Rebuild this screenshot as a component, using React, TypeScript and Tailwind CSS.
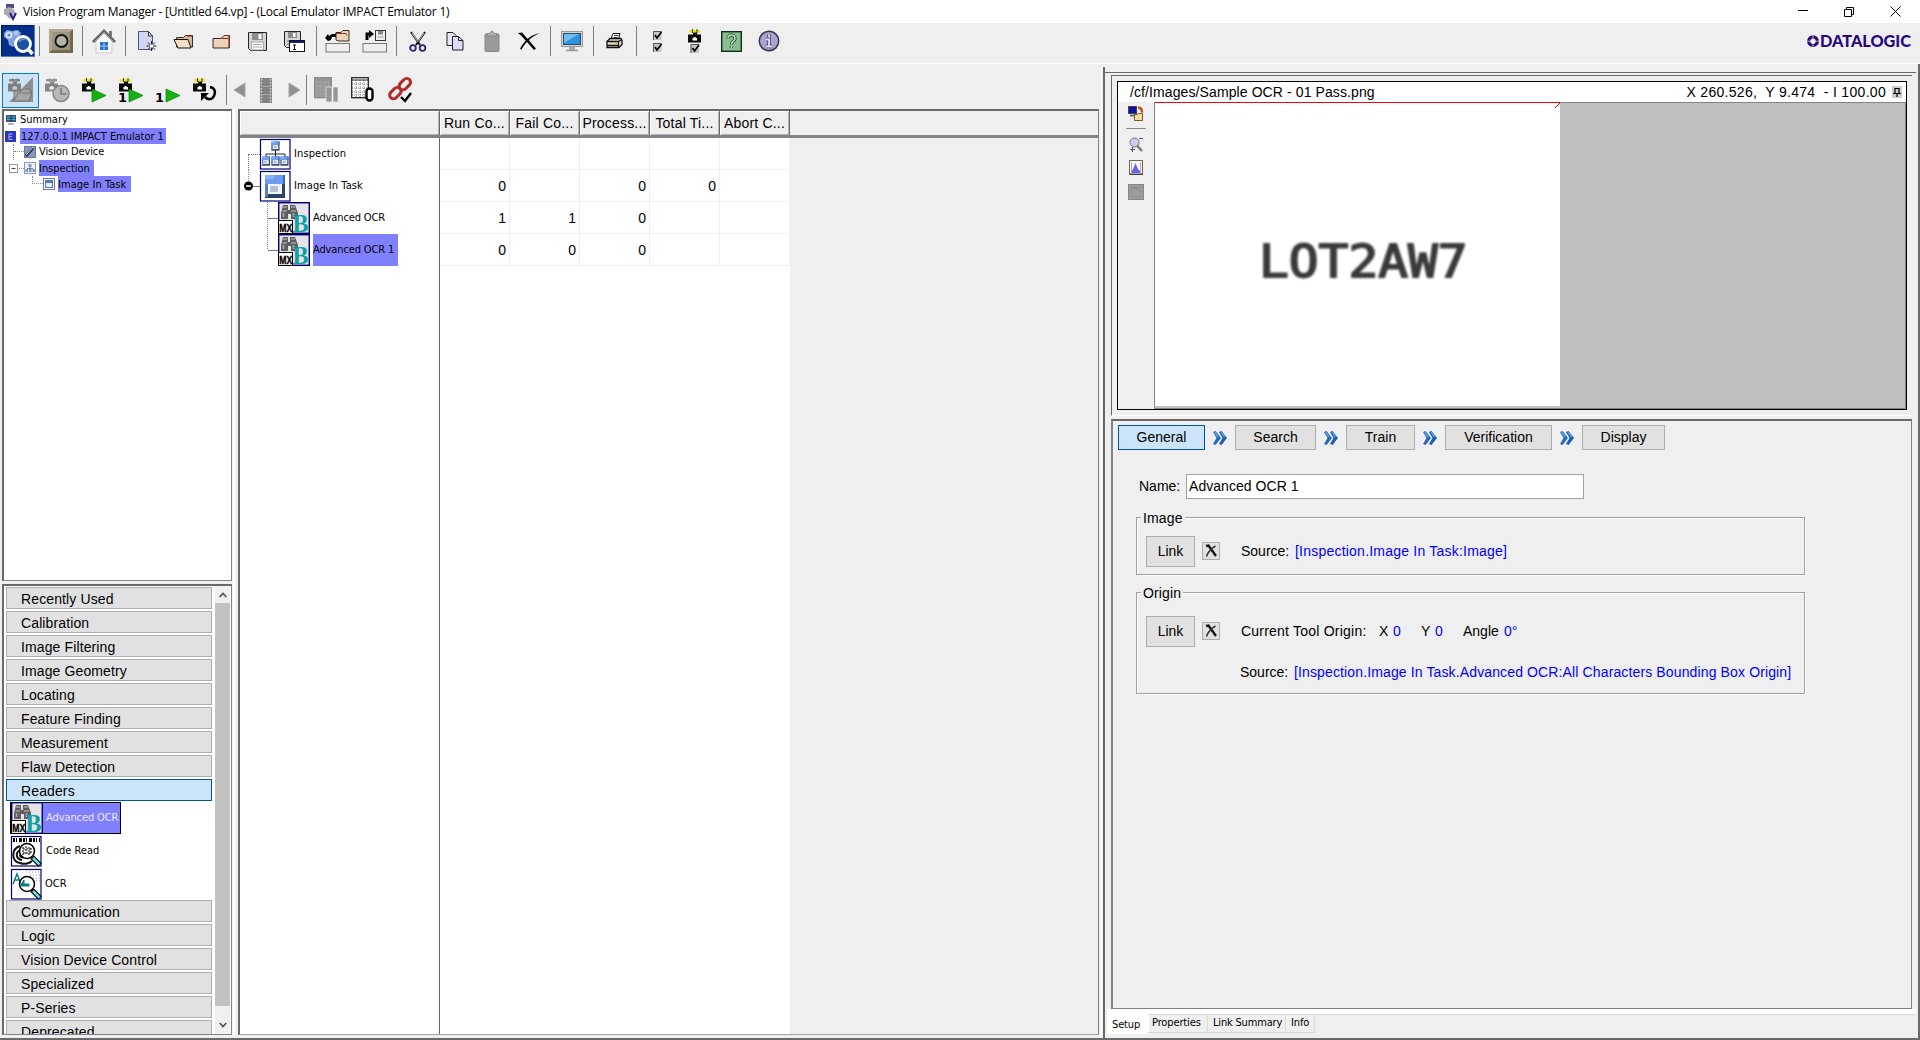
import React from "react";

type Kids = { children?: React.ReactNode };

const Svg = ({ w, h, vb, children }: Kids & { w: number; h: number; vb?: string }) => (
  <svg width={w} height={h} viewBox={vb ?? `0 0 ${w} ${h}`} fill="none" className="block shrink-0 overflow-visible">
    {children}
  </svg>
);

/* ---------- toolbar icons ---------- */
const MainIcon = () => (
  <Svg w={34} h={32}>
    <rect x="0.5" y="0.5" width="33" height="31" fill="#04308a" stroke="#001a5c" />
    <path d="M0 31.5H34M33.500 0V32" stroke="#5578b8" />
    <path d="M3 8l3-3 5 1 6-1 3 3-5 12-3 2-4-2-1-5-4-3z" fill="#7fa3dc" />
    <circle cx="8" cy="10" r="3.500" fill="#d4e2f8" />
    <circle cx="8" cy="10" r="1.500" fill="#5d86c8" />
    <circle cx="15" cy="8" r="2.500" fill="#a9c4ec" />
    <circle cx="22" cy="19" r="7.500" fill="#1c4fa6" stroke="#fff" strokeWidth="2.800" />
    <path d="M18 17c1-2 3-3 6-2.500" stroke="#6c99dc" strokeWidth="1.500" />
    <path d="M28 25l3.500 4" stroke="#fff" strokeWidth="3.500" />
  </Svg>
);
const CircleButtonIcon = () => (
  <Svg w={24} h={24}>
    <rect width="24" height="24" fill="#75694c" />
    <path d="M0 0H24L21 3H3V21L0 24z" fill="#b0a88c" />
    <rect x="3" y="3" width="18" height="18" fill="#9b9480" />
    <circle cx="12.500" cy="12" r="6" fill="#b4b4ac" stroke="#111" strokeWidth="1.800" />
  </Svg>
);
const HomeIcon = () => (
  <Svg w={24} h={25}>
    <path d="M4 12L12 4l8 8v12H4z" fill="#f8f8f8" stroke="#bbb" strokeWidth=".7" />
    <path d="M17 2h3v6l-3-2z" fill="#777" />
    <path d="M1 13L12 2l11 11" stroke="#646464" strokeWidth="2.800" />
    <path d="M3 12L12 3l9 9" stroke="#a8a8a8" strokeWidth=".8" />
    <rect x="8" y="13" width="8" height="8" fill="#2571c9" />
    <path d="M8 17h8M12 13v8" stroke="#9fd2fa" />
  </Svg>
);
const NewIcon = () => (
  <Svg w={17} h={22}>
    <path d="M.5 1.500h10l4 4v14H.5z" fill="#d3d5f3" stroke="#525278" />
    <path d="M10.500 1.500l4 4.500h-4z" fill="#fff" stroke="#333" />
    <path d="M13.500 11v10M8.500 16h10M10 12.500l7 7M17 12.500l-7 7" stroke="#222" />
    <rect x="12" y="14.500" width="3" height="3" fill="#fff" />
  </Svg>
);
const OpenIcon = () => (
  <Svg w={22} h={15}>
    <path d="M3.500 13V3.500h7l2-2h7V13z" fill="#d7b797" stroke="#3a2a20" />
    <path d="M1 5.500h14l3 8.500H5z" fill="#f6dfc8" stroke="#111" />
    <path d="M14 2h5" stroke="#7e2222" />
  </Svg>
);
const FolderIcon = () => (
  <Svg w={18} h={15}>
    <path d="M1 14V4.500h8l3-3h5V14z" fill="#ecd2b8" stroke="#3a2a20" />
    <path d="M12 1.500h5.500V14M9.500 4.500H16" stroke="#7e2a22" />
  </Svg>
);
const Floppy = ({ s = 19 }: { s?: number }) => (
  <Svg w={s} h={s} vb="0 0 19 19">
    <path d="M.5.5h18v18h-16l-2-2z" fill="#d6d6d6" stroke="#222" />
    <rect x="4" y="1" width="11" height="7" fill="#8d8d8d" />
    <rect x="10.500" y="2" width="3" height="5" fill="#fff" />
    <rect x="3.500" y="10" width="12" height="8" fill="#fff" stroke="#999" strokeWidth=".8" />
    <path d="M5 12.500h9M5 15h9" stroke="#aaa" />
  </Svg>
);
const SaveAsIcon = () => (
  <Svg w={22} h={21}>
    <path d="M.5.5h16v16h-14l-2-2z" fill="#d6d6d6" stroke="#222" />
    <rect x="4" y="1" width="9" height="6" fill="#8d8d8d" />
    <rect x="9" y="2" width="2.500" height="4" fill="#fff" />
    <path d="M3 10h7M3 13h5" stroke="#777" />
    <rect x="5.500" y="9.500" width="15" height="11" fill="#fff" stroke="#111" />
    <path d="M6 11h14" stroke="#10208a" strokeWidth="2" />
    <path d="M9 14h3M9 18.500h3M10.500 14v4.500" stroke="#111" />
  </Svg>
);
const LoadIcon = () => (
  <Svg w={25} h={24}>
    <rect x="1" y="14.500" width="23.500" height="8.500" fill="#efefef" stroke="#777" />
    <path d="M11 11V3.500h5l2-2h6V12H14z" fill="#ecd2b8" stroke="#3a2a20" />
    <path d="M10 4.500h11l1 2" stroke="#8a3a2a" />
    <path d="M0 9l3-4 1 2 3-2h4v3H7l-1 3-3 1z" fill="#000" />
  </Svg>
);
const StoreIcon = () => (
  <Svg w={25} h={24}>
    <rect x="1" y="14.500" width="23.500" height="8.500" fill="#efefef" stroke="#777" />
    <path d="M5 11V5h3" stroke="#000" strokeWidth="3" />
    <path d="M7 1l5 4-5 4z" fill="#000" />
    <rect x="13.500" y="1.500" width="10" height="10" fill="#eee" stroke="#333" />
    <rect x="16" y="2" width="5" height="3.500" fill="#888" />
    <path d="M15.500 8h6" stroke="#999" />
  </Svg>
);
const ScissorsIcon = () => (
  <Svg w={18} h={21}>
    <path d="M2 1l9 13M16 1L7 14" stroke="#111" strokeWidth="2" />
    <path d="M3 2l6 9M15 2L9.500 10" stroke="#f4f4f4" strokeWidth=".8" />
    <circle cx="4" cy="17" r="2.800" stroke="#26266e" strokeWidth="1.800" />
    <circle cx="13.500" cy="17" r="2.800" stroke="#26266e" strokeWidth="1.800" />
  </Svg>
);
const CopyIcon = () => (
  <Svg w={18} h={20}>
    <path d="M1 1.500h6l3 3v10H1z" fill="#e4e4f6" stroke="#222" />
    <path d="M6.500 5.500h6l4.500 4V19H6.500z" fill="#dcdcf6" stroke="#222" />
    <path d="M12.500 5.500v4H17" stroke="#222" />
  </Svg>
);
const PasteIcon = () => (
  <Svg w={16} h={22}>
    <rect x="1" y="4" width="14" height="17.500" rx="1" fill="#9a9a9a" stroke="#858585" />
    <path d="M3 6V3.500h2.500L8 .8l2.500 2.700H13V6z" fill="#b2b2b2" stroke="#858585" />
  </Svg>
);
const DeleteIcon = () => (
  <Svg w={22} h={19}>
    <path d="M0 1l4-.5c4 4.500 8 9 14 16l-2 1.500C10 11 5 5 0 1z" fill="#000" />
    <path d="M22 1C15 4 8 9 3.500 17.500L2 17C6 9 12 3 22 1z" fill="#000" />
  </Svg>
);
const MonitorIcon = () => (
  <Svg w={22} h={21}>
    <rect x=".5" y=".5" width="21" height="15" fill="#d5d5d5" stroke="#999" />
    <rect x="2.500" y="2.500" width="17" height="11" fill="#2e93dc" stroke="#2a4a6a" />
    <path d="M3 3h15L3 12z" fill="#70bdf0" />
    <path d="M8 16h6v3H8z" fill="#aaa" />
    <path d="M5 19.500h12" stroke="#999" strokeWidth="1.500" />
  </Svg>
);
const PrinterIcon = () => (
  <Svg w={17} h={16}>
    <path d="M5 6l2-5.500h7L12.500 6z" fill="#fff" stroke="#111" />
    <path d="M8 2.500h4.500M7.500 4.500h4" stroke="#333" />
    <path d="M1 8.500l3-3h11l1 2v4l-3 3H1z" fill="#ddd" stroke="#111" strokeWidth="1.300" />
    <path d="M1 8.500h11.500V15M12.500 8.500l3.500-2M1 12.500h11.500" stroke="#111" strokeWidth="1.300" />
    <path d="M7 10.500h4" stroke="#dfd317" strokeWidth="1.500" />
  </Svg>
);
const CheckBoxShape = ({ x, y }: { x: number; y: number }) => (
  <g transform={`translate(${x} ${y})`}>
    <rect width="8.500" height="9" fill="#c8c8c8" />
    <path d="M.5 9V.5h8" stroke="#555" />
    <path d="M2 4l2 3 4.500-6" stroke="#000" strokeWidth="1.700" />
  </g>
);
const ChecksIcon = () => (
  <Svg w={9} h={22}>
    <CheckBoxShape x={0} y={1} />
    <CheckBoxShape x={0} y={13} />
  </Svg>
);
const CameraShape = ({ top = "#efe514", body = "#0b0b0b", lens = "#fff" }) => (
  <g>
    <rect x="1" y="1" width="11" height="2.500" fill={top} />
    <path d="M4.500 0v4M9 0v4" stroke={body} strokeWidth=".8" />
    <path d="M5 3.500h4V6H5z" fill={body} />
    <rect x="0" y="5.500" width="13" height="8" fill={body} />
    <path d="M4.500 11.500V9h1.200V8h2v1H9v2.500z" fill={lens} />
  </g>
);
const CameraCheckIcon = () => (
  <Svg w={13} h={25}>
    <CameraShape />
    <CheckBoxShape x={2.500} y={15} />
  </Svg>
);
const HelpIcon = () => (
  <Svg w={21} h={21}>
    <rect x=".7" y=".7" width="19.600" height="19.600" fill="#8bbd92" stroke="#142c18" strokeWidth="1.400" />
    <path d="M7 7.500C7 3 14 3 14 7.500c0 3-3.500 2.500-3.500 6M10.500 15v2" stroke="#174023" strokeWidth="3.200" />
    <path d="M7 7.500C7 3 14 3 14 7.500c0 3-3.500 2.500-3.500 6M10.500 15v2" stroke="#b5dcb9" strokeWidth="1.700" />
  </Svg>
);
const InfoIcon = () => (
  <Svg w={22} h={22}>
    <circle cx="11" cy="11" r="9.700" fill="#aaa6d2" stroke="#37334f" strokeWidth="1.500" />
    <path d="M11 4.500v3M8 9.500h3V16M7.500 16.500h7" stroke="#454065" strokeWidth="3.500" />
    <path d="M11 4.500v3M8 9.500h3V16M7.500 16.500h7" stroke="#e6e3f8" strokeWidth="1.800" />
  </Svg>
);

/* ---------- run toolbar icons ---------- */
const CamFolderIcon = () => (
  <Svg w={26} h={26}>
    <path d="M25 0v25H1z" fill="#8e8e8e" />
    <g transform="translate(0 1)"><CameraShape top="#858585" body="#7f7f7f" lens="#b9d0e2" /></g>
    <path d="M6 24V14h7l2-2h7v3h2l-3 9z" fill="#a5a5a5" stroke="#777" />
    <path d="M6 24l4-8h14" stroke="#777" />
  </Svg>
);
const CamClockIcon = () => (
  <Svg w={26} h={26}>
    <g transform="translate(1 1)"><CameraShape top="#999" body="#868686" lens="#eee" /></g>
    <circle cx="17" cy="16.500" r="8" fill="#b7b7b7" stroke="#858585" strokeWidth="1.500" />
    <path d="M17 11v6h5" stroke="#777" strokeWidth="1.500" />
  </Svg>
);
const Play = ({ x, y }: { x: number; y: number }) => (
  <path d={`M${x} ${y}l14 6.500-14 6.500z`} fill="#12b312" stroke="#087c08" strokeWidth=".7" />
);
const One = ({ x, y }: { x: number; y: number }) => (
  <text x={x} y={y} fontSize="13" fontWeight="700" fill="#000" className="font-['DejaVu_Sans',sans-serif]">1</text>
);
const CamPlayIcon = () => (
  <Svg w={26} h={26}><g transform="translate(1 1)"><CameraShape /></g><Play x={11} y={12} /></Svg>
);
const CamOneIcon = () => (
  <Svg w={26} h={26}><g transform="translate(1 1)"><CameraShape /></g><One x={0} y={25} /><Play x={11} y={12} /></Svg>
);
const OnePlayIcon = () => (<Svg w={26} h={26}><One x={0} y={25} /><Play x={11} y={12} /></Svg>);
const CamLoopIcon = () => (
  <Svg w={26} h={26}>
    <g transform="translate(1 1)"><CameraShape /></g>
    <path d="M18 10c5 1 6 5 4 9-2 4-6 4-9 1" stroke="#000" strokeWidth="2.500" />
    <path d="M9 16h8l-8 8z" fill="#000" />
  </Svg>
);
const LeftIcon = () => (<Svg w={13} h={16}><path d="M12 1v14L1 8z" fill="#8f8f8f" stroke="#a9a9a9" /></Svg>);
const RightIcon = () => (<Svg w={13} h={16}><path d="M1 1v14l11-7z" fill="#8f8f8f" stroke="#a9a9a9" /></Svg>);
const FilmIcon = () => (
  <Svg w={12} h={25}>
    <rect width="12" height="25" fill="#828282" />
    <path d="M1.500 1v24M10.500 1v24" stroke="#d2d2d2" strokeWidth="1.500" strokeDasharray="1.500 1.500" />
    <path d="M3 8.500h6M3 16.500h6" stroke="#a9a9a9" />
  </Svg>
);
const GridShape = ({ c, f }: { c: string; f: string }) => (
  <g>
    <rect x=".7" y=".7" width="16.600" height="20" fill={f} stroke={c} strokeWidth="1.300" />
    <path d="M1 3h16" stroke={c} />
    <path d="M5 3v18M9 3v18M13 3v18M1 7h16M1 11h16M1 15h16M1 18h16" stroke={c} strokeWidth=".6" strokeDasharray="1 1" />
  </g>
);
const GridPauseIcon = () => (
  <Svg w={25} h={26}><GridShape c="#858585" f="#a2a2a2" /><path d="M12 10h6v15h-6zM19 10h5v15h-5z" fill="#969696" stroke="#eee" strokeWidth=".7" /></Svg>
);
const GridZeroIcon = () => (
  <Svg w={24} h={26}><GridShape c="#222" f="#fff" /><rect x="15.500" y="11.500" width="6" height="12" rx="3" fill="#fff" stroke="#000" strokeWidth="2.400" /></Svg>
);
const ChainIcon = () => (
  <Svg w={26} h={26}>
    <g stroke="#b22a2a" strokeWidth="3">
      <rect x="-3.800" y="-7" width="7.600" height="13" rx="3.800" transform="translate(17.500 7.500) rotate(45)" />
      <rect x="-3.800" y="-7" width="7.600" height="13" rx="3.800" transform="translate(8 16.500) rotate(45)" />
    </g>
    <path d="M14 20l4 4 6-8" stroke="#efefef" strokeWidth="4" />
    <path d="M14 20l4 4 6-8" stroke="#000" strokeWidth="2.400" />
  </Svg>
);

/* ---------- tree icons ---------- */
const TaskShape = () => (
  <g>
    <rect width="20" height="23" fill="#2e435f" />
    <path d="M0 0h18v9H0z" fill="#6f9cf0" />
    <path d="M18 0h2v9h-2z" fill="#3468d4" />
    <rect width="9" height="4" fill="#8db3f8" />
    <path d="M0 9h3v13H0z" fill="#5c7eb6" />
    <rect x="3" y="9" width="14" height="10" fill="#f2f6fc" />
    <rect x="5" y="11" width="8" height="6" fill="#b5c1d2" />
  </g>
);
const TaskIcon = () => (
  <Svg w={31} h={31}>
    <rect x=".5" y=".5" width="29.500" height="29.500" fill="#fff" stroke="#00007c" strokeWidth="1.200" />
    <g transform="translate(5 4)"><TaskShape /></g>
  </Svg>
);
const InspectIcon = () => (
  <Svg w={31} h={31}>
    <rect x=".5" y=".5" width="29.500" height="29.500" fill="#fff" stroke="#00007c" strokeWidth="1.200" />
    <path d="M15.500 10v8M6 18v-3h19v3" stroke="#14263c" />
    {[[11.5, 2.500], [2, 17.500], [11.500, 17.500], [20.500, 17.500]].map(([x, y]) => (
      <g key={`${x}-${y}`} transform={`translate(${x} ${y}) scale(.4 .4)`}><TaskShape /></g>
    ))}
  </Svg>
);
const OcrIcon = () => (
  <Svg w={32} h={32}>
    <rect x=".7" y=".7" width="30.600" height="30.600" fill="#e3e3e8" stroke="#00006e" strokeWidth="1.400" />
    <path d="M5 3h5v5h2V3h5l3 8v6h-7v-5h-3v5H3v-6z" fill="#5e5e5e" />
    <path d="M5 5h4M13 5h4M4.500 9h4.500M13 9h5" stroke="#c4c4c4" />
    <path d="M5.500 11v4M15.500 11v4" stroke="#aaa" strokeWidth="1.500" />
    <text x="14.500" y="30" fontSize="25" fontWeight="700" fill="#0fa0a4" textLength="16" lengthAdjust="spacingAndGlyphs" className="font-[Liberation_Serif,serif]">B</text>
    <rect x=".5" y="18.500" width="14" height="13" fill="#fff" stroke="#000" />
    <text x="1.200" y="29.500" fontSize="11" fontWeight="700" fill="#000" stroke="#000" strokeWidth=".4" textLength="13" lengthAdjust="spacingAndGlyphs" className="font-[Liberation_Sans,sans-serif]">MX</text>
  </Svg>
);
const Lens = () => (
  <g>
    <path d="M21 21l8 8" stroke="#000" strokeWidth="5" />
    <path d="M22 22l6.500 6.500" stroke="#6fe0ea" strokeWidth="2.500" />
    <circle cx="16" cy="15" r="7.500" fill="#fff" stroke="#000" strokeWidth="1.500" />
  </g>
);
const CodeReadIcon = () => (
  <Svg w={31} h={31}>
    <rect x=".5" y=".5" width="29.500" height="29.500" fill="#fff" stroke="#00007c" strokeWidth="1.200" />
    <path d="M2 4h27" stroke="#000" strokeWidth="4" strokeDasharray="2 1 1 2 3 1" />
    <path d="M9 10c-9 3-9 15 0 17 5 2 10 0 12-2M9 14c-5 3-4 9 2 10M10 18c-2 2 0 4 3 3" stroke="#111" strokeWidth="2" />
    <Lens />
    <path d="M12 11v8M15 10v9M18 11v8M20 12v5M12 13h8M12 17h8" stroke="#222" strokeWidth="1.200" strokeDasharray="2 1" />
  </Svg>
);
const OcrPlainIcon = () => (
  <Svg w={31} h={31}>
    <rect x=".5" y=".5" width="29.500" height="29.500" fill="#fff" stroke="#00007c" strokeWidth="1.200" />
    <path d="M15 3h14M19 6h10M22 9h7M25 12h4" stroke="#999" strokeDasharray="1 2" />
    <path d="M2 15l4-10 4 10M3.500 11h5" stroke="#0b7878" strokeWidth="1.400" />
    <Lens />
    <path d="M9 17l4-6v4h5v2z" fill="#0b8585" stroke="#0b7878" />
  </Svg>
);
const MiniSummary = () => (
  <Svg w={10} h={10}>
    <rect width="10" height="7" fill="#365a78" />
    <path d="M1 2h8M1 4.500h8" stroke="#37b0e4" /><path d="M5 0v7" stroke="#123" strokeWidth=".8" />
    <path d="M2 9h6" stroke="#999" strokeWidth="1.500" />
  </Svg>
);
const MiniE = () => (
  <Svg w={11} h={11}>
    <rect width="11" height="11" fill="#2f36be" />
    <path d="M7.500 3h-3.500v5.500h3.500M4 5.700h3" stroke="#aab4f4" />
  </Svg>
);
const MiniDevice = () => (
  <Svg w={12} h={12}>
    <rect x=".5" y=".5" width="11" height="11" fill="#8798ba" stroke="#6d7590" />
    <path d="M2 10l7-8" stroke="#283858" strokeWidth="3" /><path d="M2 9l7-8" stroke="#e5e9f3" />
  </Svg>
);
const MiniInspect = () => (
  <Svg w={12} h={12}>
    <rect x=".5" y=".5" width="11" height="11" fill="#eef2fa" stroke="#8c98c0" />
    <path d="M4.500 2h3v3h-3zM1.500 7h2.500v3H1.500zM5 7h2.500v3H5zM8.500 7H11v3H8.500z" fill="#7a95c8" />
    <path d="M6 5v2M3 6.500h6" stroke="#456" strokeWidth=".7" />
  </Svg>
);
const MiniTask = () => (
  <Svg w={12} h={12}>
    <rect x=".5" y=".5" width="11" height="11" fill="#fff" stroke="#6a74b8" />
    <rect x="2" y="2" width="8" height="8" fill="#4e78c0" /><rect x="3" y="5" width="6" height="4" fill="#e8eef8" />
  </Svg>
);

const Chevrons = () => (
  <div className="flex w-[30px] justify-center pr-px">
    <Svg w={14} h={14}>
      <path d="M0 1l2.500-1L8 7l-5.500 7L0 13l3.500-6z" fill="#2768c0" />
      <path d="M6 1l2.500-1L14 7l-5.500 7L6 13l3.500-6z" fill="#1d5cb4" />
      <path d="M1 1.500L2.500 1 6 6H4zM7.500 1.500L9 1l3.500 5h-2z" fill="#5f9fe4" />
    </Svg>
  </div>
);

/* ---------- shared pieces ---------- */
const Btn = ({ children, w = "w-[37px]" }: Kids & { w?: string }) => (
  <div className={`flex h-full shrink-0 items-center justify-center ${w}`}>{children}</div>
);
const Sep = () => (
  <div className="flex w-1.5 shrink-0 justify-center"><div className="h-[30px] w-px bg-[#7f7f7f]" /></div>
);
const Cat = ({ label, active = false }: { label: string; active?: boolean }) => (
  <div className={`mb-0.5 flex h-[22px] w-[206px] shrink-0 items-center border pl-[14px] text-[14px] leading-[22px] tracking-[0.12px] ${active ? "border-[#0055a0] bg-[#cce4f7]" : "border-[#adadad] bg-[#e1e1e1]"}`}>
    <span className="relative top-px">{label}</span>
  </div>
);
const Tahoma = ({ children, className = "tracking-[-0.13px]" }: Kids & { className?: string }) => (
  <span className={`whitespace-nowrap font-['DejaVu_Sans_Condensed','DejaVu_Sans',sans-serif] text-[11px] ${className}`}>{children}</span>
);

const before = ["Recently Used", "Calibration", "Image Filtering", "Image Geometry", "Locating", "Feature Finding", "Measurement", "Flaw Detection"];
const after = ["Communication", "Logic", "Vision Device Control", "Specialized", "P-Series", "Deprecated"];
const cols = ["Run Co...", "Fail Co...", "Process...", "Total Ti...", "Abort C..."];
const rows = [
  ["", "", "", "", ""],
  ["0", "", "0", "0", ""],
  ["1", "1", "0", "", ""],
  ["0", "0", "0", "", ""],
];

function TitleBar() {
  return (
    <header className="flex h-[23px] shrink-0 items-center bg-white pl-[3px]">
      <Svg w={14} h={16}>
        <path d="M3 0h8v4H3z" fill="#514a87" />
        <path d="M1 5l5-2 5 2 1 4-5 6-3-3-3-2z" fill="#aaa9b2" />
        <path d="M7 9l3 6 3-6" stroke="#2b208c" strokeWidth="2" />
      </Svg>
      <span className="ml-[6px] whitespace-nowrap pt-px font-['Open_Sans',sans-serif] text-[12px] tracking-[-0.24px]">
        Vision Program Manager - [Untitled 64.vp] - (Local Emulator IMPACT Emulator 1)
      </span>
      <div className="ml-auto mr-[19px] flex items-center gap-[36px]">
        <Svg w={10} h={11}><path d="M0 4.500h10" stroke="#000" /></Svg>
        <Svg w={10} h={10}><path d="M.5 2.500h7v7h-7zM2.500 2V.5h7v7H8" stroke="#000" /></Svg>
        <Svg w={11} h={11}><path d="M.5.5l10 10M10.500.5l-10 10" stroke="#000" /></Svg>
      </div>
    </header>
  );
}

function MainToolbar() {
  return (
    <div className="flex h-[41px] shrink-0 border-b border-white">
      <div className="-ml-px mt-[3px] flex h-[30px] items-center">
        <Btn><MainIcon /></Btn><Sep />
        <Btn><CircleButtonIcon /></Btn><Sep />
        <Btn><HomeIcon /></Btn><Sep />
        <Btn><NewIcon /></Btn><Btn><OpenIcon /></Btn><Btn><FolderIcon /></Btn><Btn><Floppy /></Btn><Btn><SaveAsIcon /></Btn><Sep />
        <Btn><LoadIcon /></Btn><Btn><StoreIcon /></Btn><Sep />
        <Btn><ScissorsIcon /></Btn><Btn><CopyIcon /></Btn><Btn><PasteIcon /></Btn><Btn><DeleteIcon /></Btn><Sep />
        <Btn><MonitorIcon /></Btn><Sep />
        <Btn><PrinterIcon /></Btn><Sep />
        <Btn><ChecksIcon /></Btn><Btn><CameraCheckIcon /></Btn><Btn><HelpIcon /></Btn><Btn><InfoIcon /></Btn>
      </div>
      <div className="ml-auto mr-[9px] mt-[12px]">
        <svg width="104" height="14" viewBox="0 0 104 14" className="block overflow-visible">
          <circle cx="6" cy="6.200" r="4.300" fill="none" stroke="#28087e" strokeWidth="3.200" />
          <path d="M6 0v12.400M0 6.200h12" stroke="#efefef" strokeWidth=".7" />
          <text x="13" y="12" fontSize="16" fontWeight="900" fill="#28087e" textLength="91" lengthAdjust="spacingAndGlyphs" className="font-[Lato,sans-serif]">DATALOGIC</text>
        </svg>
      </div>
    </div>
  );
}

function RunToolbar() {
  return (
    <div className="flex h-[45px] shrink-0 items-center pt-[7px]">
      <div className="flex h-[35px] items-center pl-0.5">
        <div className="flex h-[35px] w-[37px] items-center justify-center border border-[#0078d7] bg-[#cce4f7]"><CamFolderIcon /></div>
        <div className="-ml-px flex h-[35px] items-center">
          <Btn><CamClockIcon /></Btn><Btn><CamPlayIcon /></Btn><Btn><CamOneIcon /></Btn><Btn><OnePlayIcon /></Btn><Btn><CamLoopIcon /></Btn>
          <Sep />
          <Btn w="w-[20px]"><LeftIcon /></Btn><Btn w="w-[34px]"><FilmIcon /></Btn><Btn w="w-[22px]"><RightIcon /></Btn>
          <div className="-ml-0.5"><Sep /></div>
          <Btn w="w-[35px]"><GridPauseIcon /></Btn><Btn><GridZeroIcon /></Btn><Btn><ChainIcon /></Btn>
        </div>
      </div>
    </div>
  );
}

function DeviceTree() {
  return (
    <div className="h-[472px] w-[230px] shrink-0 border-2 border-r border-b border-[#696969] border-b-[#82828c] border-r-[#82828c] bg-white pl-px pt-px">
      <div className="flex h-4 items-center gap-1 pl-px"><MiniSummary /><Tahoma className="pt-px">Summary</Tahoma></div>
      <div className="flex h-4 items-center gap-1"><MiniE /><Tahoma className="h-4 w-[146px] bg-[#8080ff] pl-px leading-[17px] tracking-[-0.05px]">127.0.0.1 IMPACT Emulator 1</Tahoma></div>
      <div className="flex h-4 items-center pl-2">
        <div className="h-4 w-[11px] border-l border-dotted border-[#888]"><div className="h-2 border-b border-dotted border-[#888]" /></div>
        <MiniDevice /><Tahoma className="ml-[3px] pt-px tracking-[-0.1px]">Vision Device</Tahoma>
      </div>
      <div className="flex h-4 items-center pl-1">
        <Svg w={15} h={9}><rect x=".5" y=".5" width="8" height="8" fill="#fff" stroke="#969696" /><path d="M2.500 4.500h4" stroke="#2846a0" /><path d="M10 4.500h5" stroke="#888" strokeDasharray="1 1" /></Svg>
        <MiniInspect /><Tahoma className="ml-[3px] h-4 w-[55px] bg-[#8080ff] leading-[17px] tracking-[-0.04px]">Inspection</Tahoma>
      </div>
      <div className="flex h-4 items-center pl-[27px]">
        <div className="mb-2 h-2 w-[11px] border-b border-l border-dotted border-[#888]" />
        <MiniTask /><Tahoma className="ml-[3px] h-4 w-[73px] bg-[#8080ff] leading-[17px] tracking-[0.05px]">Image In Task</Tahoma>
      </div>
    </div>
  );
}

function Palette() {
  return (
    <div className="mt-[3px] flex h-[451px] w-[230px] shrink-0 border-2 border-r border-b border-[#696969] border-b-[#82828c] border-r-[#82828c] bg-white">
      <div className="flex h-full w-[211px] flex-col overflow-hidden pl-0.5 pt-px">
        {before.map((c) => <Cat key={c} label={c} />)}
        <Cat label="Readers" active />
        <div className="-mt-px flex h-[98px] shrink-0 flex-col pl-[4px]">
          <div className="flex h-[32px] w-[111px] items-center border border-black bg-[#8080ff]"><OcrIcon /><Tahoma className="ml-[3px] pt-px tracking-[-0.1px] text-[#e8e8ff]">Advanced OCR</Tahoma></div>
          <div className="mt-px flex h-[32px] items-center pl-px"><CodeReadIcon /><Tahoma className="ml-1 tracking-[0px]">Code Read</Tahoma></div>
          <div className="mt-px flex h-[32px] items-center pl-px"><OcrPlainIcon /><Tahoma className="ml-[3px]">OCR</Tahoma></div>
        </div>
        {after.map((c) => <Cat key={c} label={c} />)}
      </div>
      <div className="flex h-full w-[15px] flex-col items-center justify-between bg-[#f0f0f0]">
        <div className="flex h-[17px] items-center"><Svg w={8} h={6}><path d="M.7 5L4 1.500 7.300 5" stroke="#555" strokeWidth="1.800" /></Svg></div>
        <div className="w-full flex-1 bg-[#c2c2c2]" />
        <div className="flex h-[28px] items-center pt-2.5"><Svg w={8} h={6}><path d="M.7 1L4 4.500 7.300 1" stroke="#555" strokeWidth="1.800" /></Svg></div>
      </div>
    </div>
  );
}

function TaskTable() {
  return (
    <section className="flex h-[926px] w-[861px] shrink-0 flex-col border border-l-2 border-t-2 border-[#696969] border-b-[#a0a0a0] border-r-[#82828c]">
      <div className="flex h-[27px] shrink-0 border-b-[3px] border-[#80838a]">
        <div className="w-[200px] border-r border-[#696969] bg-[#efefef] shadow-[inset_1px_1px_0_#fff,inset_-1px_-1px_0_#b4b4b4]" />
        {cols.map((c) => (
          <div key={c} className="flex w-[70px] items-center justify-center whitespace-nowrap border-r border-[#696969] bg-[#efefef] text-[14px] tracking-[0.2px] shadow-[inset_1px_1px_0_#fff,inset_-1px_-1px_0_#b4b4b4]">{c}</div>
        ))}
      </div>
      <div className="flex flex-1">
        <div className="w-[200px] border-r border-[#696969] bg-white">
          <div className="flex h-8 items-center pl-[8px]">
            <div className="mt-4 h-4 w-[12px] border-l border-t border-dotted border-[#777]" />
            <InspectIcon /><Tahoma className="ml-[3px] pt-px tracking-[0.1px]">Inspection</Tahoma>
          </div>
          <div className="flex h-8 items-center pl-[4px]">
            <Svg w={16} h={32}><path d="M4.500 0v12" stroke="#888" strokeDasharray="1 1" /><circle cx="4.500" cy="16" r="4.500" fill="#000" /><path d="M2 16h5" stroke="#fff" strokeWidth="1.500" /><path d="M9 16.500h7" stroke="#777" /></Svg>
            <TaskIcon /><Tahoma className="ml-[3px] pt-px tracking-[0.1px]">Image In Task</Tahoma>
          </div>
          {["Advanced OCR", "Advanced OCR 1"].map((t, i) => (
            <div key={t} className="flex h-8 items-center pl-[27px]">
              <Svg w={11} h={32}><path d={i ? "M.5 0v16" : "M.5 0v32"} stroke="#888" strokeDasharray="1 1" /><path d="M1 16.500h10" stroke="#777" /></Svg>
              <OcrIcon />
              <Tahoma className={`ml-[3px] h-8 leading-8 tracking-[-0.13px] ${i ? "w-[85px] bg-[#8080ff]" : ""}`}>{t}</Tahoma>
            </div>
          ))}
        </div>
        <div className="w-[350px] bg-white">
          {rows.map((r, i) => (
            <div key={i} className="flex h-8 border-b border-[#efefef]">
              {r.map((v, j) => <div key={j} className="w-[70px] border-r border-[#efefef] pr-[3px] pt-px text-right text-[14px] leading-[30px]">{v}</div>)}
            </div>
          ))}
        </div>
      </div>
    </section>
  );
}

function ImageViewer() {
  return (
    <div className="ml-[5px] mt-[5px] flex h-[329px] w-[790px] shrink-0 flex-col border border-black">
      <div className="flex h-[20px] shrink-0 items-center bg-white pl-[12px] pr-[4px] text-[14px]">
        <span className="whitespace-pre tracking-[0.1px]">/cf/Images/Sample OCR - 01 Pass.png</span>
        <span className="ml-auto whitespace-pre tracking-[0.3px]">X 260.526,  Y 9.474  - I 100.00</span>
        <div className="ml-[6px] flex h-[12px] w-[10px] items-center justify-center bg-[#ccc]">
          <Svg w={8} h={9}><path d="M2 0v5M6 0v5M0 5.500h8M2 .5h4M4 5v4" stroke="#000" strokeWidth="1.200" /></Svg>
        </div>
      </div>
      <div className="flex flex-1">
        <div className="flex w-[37px] flex-col items-center border-r border-[#82828c] pt-[4px]">
          <Svg w={16} h={16}><rect x=".5" y=".5" width="8" height="7" fill="#1010a8" stroke="#444" /><path d="M2 9.500h6" stroke="#666" strokeWidth="2" /><path d="M6.500 14.500V8.500h3l1-1h4v7z" fill="#f6dba0" stroke="#6d5a33" /><path d="M10 1.500c3 0 4 2 4 5" stroke="#b85420" strokeWidth="2.500" /></Svg>
          <div className="mt-[6px] h-px w-5 bg-[#888]" />
          <div className="mt-[8px]"><Svg w={15} h={16}><circle cx="5.500" cy="5.500" r="4.500" fill="#c9cde8" stroke="#777" /><path d="M8 8.500l5 5.500" stroke="#777" strokeWidth="2.500" /><path d="M10 1.500h4M1 12.500h5M3.500 10v5" stroke="#555" /></Svg></div>
          <div className="mt-[7px]"><Svg w={15} h={16}><rect x=".5" y=".5" width="13" height="14" fill="#fff" stroke="#666" /><path d="M2 12l2-3 2.500-6L9 9l3 3v1H2z" fill="#6666e8" /><path d="M2.500 2v11M11.500 2v11" stroke="#d88" strokeWidth=".8" /><path d="M1 13.500h13v1.500H1z" fill="#444" /></Svg></div>
          <div className="mt-[8px]"><Svg w={16} h={16}><rect x=".5" y=".5" width="15" height="15" fill="#9c9c9c" stroke="#868686" /><path d="M2 9l3-4 3-1 3 3 3 1M2 3.500h12M2 12.500h12" stroke="#8c8c8c" /></Svg></div>
        </div>
        <div className="flex flex-1 border-b border-r border-t border-[#82828c] bg-[#bfbfbf]">
          <div className="relative -mt-px h-[304px] w-[405px] border-t border-[#ff0000] bg-white pl-[104px] pt-[131px]">
            <div className="absolute right-0 top-0"><Svg w={5} h={5}><path d="M0 5l5-5" stroke="#f00" /></Svg></div>
            <span className="block scale-y-[0.9] whitespace-nowrap font-['DejaVu_Sans_Mono',monospace] text-[49.500px] leading-[56px] text-[#3a3a3a] blur-[1px] [-webkit-text-stroke:2px_#3a3a3a]">LOT2AW7</span>
          </div>
        </div>
      </div>
    </div>
  );
}

const Tab = ({ w, label, on = false }: { w: string; label: string; on?: boolean }) => (
  <div className={`flex h-[25px] items-center justify-center border text-[14px] ${w} ${on ? "border-[#0055a0] bg-[#cce4f7]" : "border-[#adadad] bg-[#e1e1e1]"}`}>{label}</div>
);
const LinkButtons = () => (
  <>
    <div className="flex h-[31px] w-[49px] items-center justify-center border border-[#adadad] bg-[#e1e1e1]">Link</div>
    <div className="mb-[2px] ml-[7px] flex h-[18px] w-[18px] items-center justify-center border border-[#adadad] bg-[#e1e1e1]">
      <Svg w={12} h={12}><path d="M1 1l2.500-.5L11 11" stroke="#111" strokeWidth="2.400" /><path d="M10.500 1C7 3 3 7 1.500 11.500" stroke="#333" strokeWidth="1.500" /></Svg>
    </div>
  </>
);
const Group = ({ title, h, children }: Kids & { title: string; h: string }) => (
  <div className={`relative w-[669px] border border-[#a0a0a0] shadow-[1px_1px_0_#fff,inset_1px_1px_0_#fff] ${h}`}>
    <span className="absolute left-[4px] top-[-9px] bg-[#efefef] px-0.5 text-[14px] leading-[18px] tracking-[0.15px]">{title}</span>
    {children}
  </div>
);

function SetupForm() {
  return (
    <div className="mt-[8px] h-[590px] w-[801px] shrink-0 border border-l-2 border-t-2 border-[#696969] border-b-[#82828c] border-l-[#82828c] border-r-[#82828c] pl-[5px] pt-[4px] text-[14px]">
      <div className="flex items-center">
        <Tab w="w-[87px]" label="General" on /><Chevrons />
        <Tab w="w-[81px]" label="Search" /><Chevrons />
        <Tab w="w-[69px]" label="Train" /><Chevrons />
        <Tab w="w-[107px]" label="Verification" /><Chevrons />
        <Tab w="w-[83px]" label="Display" />
      </div>
      <div className="mt-[24px] flex items-center pl-[21px]">
        <span className="w-[47px]">Name:</span>
        <div className="h-[25px] w-[398px] border border-[#a0a0a8] bg-white pl-[2px] leading-[23px] tracking-[0.05px]">Advanced OCR 1</div>
      </div>
      <div className="ml-[18px] mt-[18px]">
        <Group title="Image" h="h-[58px]">
          <div className="flex items-center whitespace-pre pl-[9px] pt-[18px]">
            <LinkButtons />
            <span className="ml-[21px] w-[54px]">Source:</span><span className="tracking-[0.22px] text-[#0000ff]">[Inspection.Image In Task:Image]</span>
          </div>
        </Group>
      </div>
      <div className="ml-[18px] mt-[17px]">
        <Group title="Origin" h="h-[102px]">
          <div className="flex items-center whitespace-pre pl-[9px] pt-[23px]">
            <LinkButtons />
            <span className="ml-[21px] w-[138px] tracking-[0.22px]">Current Tool Origin:</span>
            <span className="w-[14px]">X</span><span className="w-[28px] text-[#0000ff]">0</span>
            <span className="w-[14px]">Y</span><span className="w-[28px] text-[#0000ff]">0</span>
            <span className="w-[41px]">Angle</span><span className="text-[#0000ff]">0°</span>
          </div>
          <div className="mt-[15px] flex whitespace-pre pl-[103px] leading-[21px]">
            <span className="w-[54px]">Source:</span>
            <span className="tracking-[0.13px] text-[#0000ff]">[Inspection.Image In Task.Advanced OCR:All Characters Bounding Box Origin]</span>
          </div>
        </Group>
      </div>
    </div>
  );
}

export default function App() {
  return (
    <div className="flex h-[1040px] w-[1920px] flex-col overflow-hidden bg-[#efefef] font-['Liberation_Sans',Arial,sans-serif] text-black">
      <TitleBar />
      <MainToolbar />
      <div className="flex flex-1 border-b-2 border-[#696969]">
        <div className="flex w-[1101px] flex-col">
          <RunToolbar />
          <div className="flex">
            <div className="flex w-[235px] flex-col border-r-2 border-white pl-0.5">
              <DeviceTree />
              <Palette />
            </div>
            <div className="pl-[3px]"><TaskTable /></div>
          </div>
        </div>
        <div className="flex flex-1 border-r-2 border-[#696969] pt-[3px]">
          <div className="w-0.5 border-l border-white" />
          <div className="flex w-[813px] flex-col border-l-2 border-[#696969]">
            <div className="mt-[5px] h-px shrink-0 bg-[#696969]" />
            <div className="ml-[6px] mt-[2px] flex h-[341px] w-[801px] shrink-0 flex-col border-l border-t border-[#696969] border-b border-b-white">
              <ImageViewer />
            </div>
            <div className="-mt-[5px] ml-[6px]"><SetupForm /></div>
            <div className="ml-0.5 h-[5px] shrink-0 bg-white" />
            <div className="flex h-[21px] items-start pl-0.5">
              <div className="flex h-[20px] w-[42px] items-center bg-white pl-[5px] pt-0.5"><Tahoma>Setup</Tahoma></div>
              <div className="-ml-px flex h-[19px] border-b border-[#d9d9d9]">
                <div className="flex w-[60px] items-center border-r border-t border-[#d9d9d9] pl-[4px]"><Tahoma>Properties</Tahoma></div>
                <div className="flex w-[78px] items-center border-r border-t border-[#d9d9d9] pl-[5px]"><Tahoma className="tracking-[-0.18px]">Link Summary</Tahoma></div>
                <div className="flex w-[29px] items-center border-r border-t border-[#d9d9d9] pl-[5px]"><Tahoma>Info</Tahoma></div>
              </div>
              <div className="h-px flex-1 bg-[#d9d9d9]" />
            </div>
          </div>
        </div>
      </div>
    </div>
  );
}
